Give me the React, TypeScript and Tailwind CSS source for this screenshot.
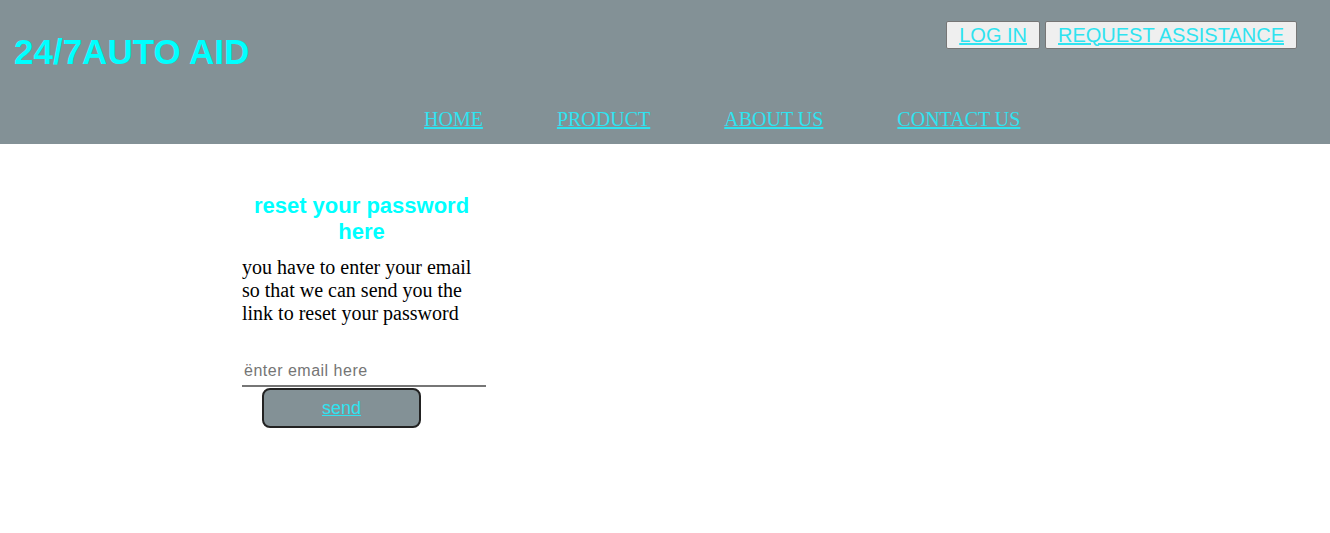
export default function App() {
  return (
    <div className="min-h-[533px] bg-white font-['Liberation_Serif',serif]">
      <header className="bg-[#839196]">
        <div className="flex justify-between items-start">
          <h1 className="ml-[14px] mt-[32px] text-[35px] leading-[40px] font-bold text-[#00ffff] font-['Liberation_Sans',Arial,sans-serif]">
            24/7AUTO AID
          </h1>
          <div className="flex gap-[5px] mt-[21px] mr-[33px] font-['Liberation_Sans',Arial,sans-serif]">
            <button className="h-[28px] px-[12px] bg-[#efefef] border border-[#767676] rounded-[2px] text-[20px] leading-[23px] text-[#2fe3f0] underline">
              LOG IN
            </button>
            <button className="h-[28px] px-[12px] bg-[#efefef] border border-[#767676] rounded-[2px] text-[20px] leading-[23px] text-[#2fe3f0] underline">
              REQUEST ASSISTANCE
            </button>
          </div>
        </div>
        <nav className="flex gap-[74px] pl-[424px] mt-[36px] pb-[13px] text-[20px] leading-[23px]">
          <a href="#" className="text-[#2fe3f0] underline">HOME</a>
          <a href="#" className="text-[#2fe3f0] underline">PRODUCT</a>
          <a href="#" className="text-[#2fe3f0] underline">ABOUT US</a>
          <a href="#" className="text-[#2fe3f0] underline">CONTACT US</a>
        </nav>
      </header>

      <main className="ml-[242px] w-[244px] pt-[49px]">
        <h2 className="mr-[5px] text-center text-[22px] leading-[26px] font-bold text-[#00ffff] font-['Liberation_Sans',Arial,sans-serif]">
          reset your password here
        </h2>
        <p className="mt-[11px] text-[20px] leading-[23px] text-black">
          you have to enter your email so that we can send you the link to reset your password
        </p>
        <input
          type="email"
          placeholder="ënter email here"
          className="mt-[32px] w-[244px] h-[30px] px-[2px] border-b-2 border-[#767676] outline-none text-[16px] tracking-[0.5px] font-['Liberation_Sans',Arial,sans-serif] placeholder:text-[#757575]"
        />
        <button className="block ml-[20px] mt-[1px] w-[159px] h-[40px] bg-[#839196] border-2 border-[#222] rounded-lg text-[18px] text-[#2fe3f0] underline font-['Liberation_Sans',Arial,sans-serif]">
          send
        </button>
      </main>
    </div>
  );
}
